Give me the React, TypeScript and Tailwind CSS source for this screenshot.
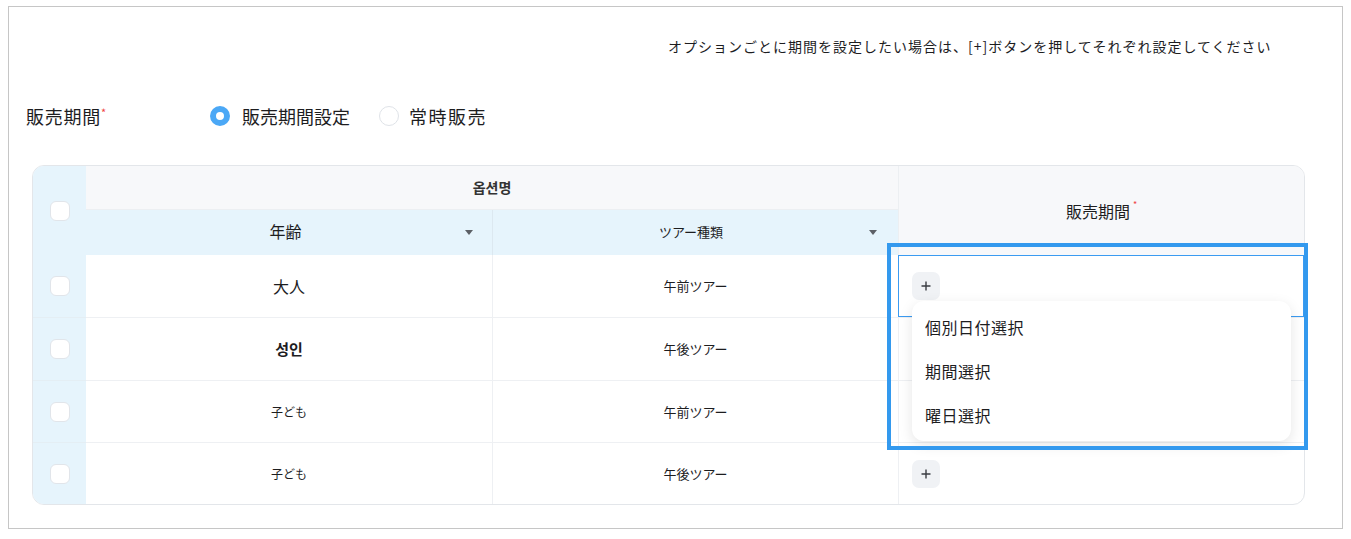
import { useState } from 'react'

type Row = {
  age: string
  ageClass: string
  tour: string
}

const rows: Row[] = [
  { age: '大人', ageClass: 'text-[16px]', tour: '午前ツアー' },
  { age: '성인', ageClass: 'text-[15px] font-bold', tour: '午後ツアー' },
  { age: '子ども', ageClass: 'text-[12px]', tour: '午前ツアー' },
  { age: '子ども', ageClass: 'text-[12px]', tour: '午後ツアー' },
]

const menuItems = ['個別日付選択', '期間選択', '曜日選択']

function Checkbox() {
  return <div className="w-[20px] h-[20px] rounded-[6px] border border-[#e1e5ea] bg-white" />
}

function Caret() {
  return (
    <svg width="8" height="5" viewBox="0 0 8 5" className="shrink-0">
      <path d="M0 0h8L4 5z" fill="#5c6066" />
    </svg>
  )
}

function Radio({ checked }: { checked: boolean }) {
  return checked ? (
    <span className="w-[20px] h-[20px] rounded-full border-[6px] border-[#4ba8f6] bg-white" />
  ) : (
    <span className="w-[20px] h-[20px] rounded-full border border-[#dfe3e8] bg-white" />
  )
}

function PlusButton() {
  return (
    <button className="w-[28px] h-[28px] rounded-[7px] bg-[#f0f2f5] flex items-center justify-center">
      <svg width="10" height="10" viewBox="0 0 10 10">
        <path d="M5 0.5v9M0.5 5h9" stroke="#3a3d42" strokeWidth="1.4" />
      </svg>
    </button>
  )
}

export default function App() {
  const [mode, setMode] = useState<'period' | 'always'>('period')

  return (
    <div className="w-full h-[539px] bg-white pt-[6px] pl-[8px] text-[#1d1d1f] font-['Noto_Sans_CJK_JP','Noto_Sans_CJK_KR',sans-serif]">
      <div className="w-[1335px] h-[523px] border border-[#c6c6c6]">
        {/* hint */}
        <div className="pt-[29px] pl-[659px] text-[14px] leading-[20px] tracking-[1px]">
          オプションごとに期間を設定したい場合は、[+]ボタンを押してそれぞれ設定してください
        </div>

        {/* sale period radios */}
        <div className="mt-[48px] pl-[17px] flex items-center h-[24px]">
          <div className="w-[184px] flex items-start text-[18px] leading-[24px] tracking-[0.75px]">
            販売期間
            <span className="text-[11px] leading-[12px] text-[#ef4444] mt-[2px]">*</span>
          </div>
          <label className="flex items-center gap-[12px] cursor-pointer" onClick={() => setMode('period')}>
            <Radio checked={mode === 'period'} />
            <span className="text-[18px] leading-[24px]">販売期間設定</span>
          </label>
          <label className="ml-[29px] flex items-center gap-[10px] cursor-pointer" onClick={() => setMode('always')}>
            <Radio checked={mode === 'always'} />
            <span className="text-[18px] leading-[24px] tracking-[1.5px]">常時販売</span>
          </label>
        </div>

        {/* option table */}
        <div className="relative mt-[37px] ml-[23px] w-[1273px]">
          <div className="h-[340px] rounded-[12px] border border-[#e3e6ea] overflow-hidden grid grid-cols-[53px_406px_406px_1fr] grid-rows-[44px_45px_62px_63px_62px_62px]">
            <div className="row-span-2 bg-[#e6f4fc] flex items-center justify-center">
              <Checkbox />
            </div>
            <div className="col-span-2 bg-[#f7f8fa] border-b border-[#eceff2] flex items-center justify-center text-[14px] font-bold text-[#333]">
              옵션명
            </div>
            <div className="row-span-2 bg-[#f7f8fa] border-l border-[#eceff2] flex items-center justify-center text-[16px]">
              <span className="flex items-start">
                販売期間
                <span className="text-[9px] leading-[10px] text-[#ef4444] ml-[3px] mt-[1px]">*</span>
              </span>
            </div>
            <div className="bg-[#e6f4fc] flex items-center pl-[20px] pr-[19px]">
              <span className="flex-1 text-center text-[16px] leading-[20px] -mt-[4px]">年齢</span>
              <Caret />
            </div>
            <div className="bg-[#e6f4fc] border-l border-[#dce8f0] flex items-center pl-[20px] pr-[21px]">
              <span className="flex-1 text-center text-[13px] leading-[20px] -mt-[2px]">ツアー種類</span>
              <Caret />
            </div>

            {rows.map((row, i) => (
              <div key={i} className="contents">
                <div className={`bg-[#e6f4fc] flex items-center justify-center ${i > 0 ? 'border-t border-[#e4eef4]' : ''}`}>
                  <Checkbox />
                </div>
                <div className={`flex items-center justify-center ${row.ageClass} ${i > 0 ? 'border-t border-[#eef0f3]' : ''}`}>
                  {row.age}
                </div>
                <div className={`border-l border-[#eef0f3] flex items-center justify-center text-[13px] ${i > 0 ? 'border-t' : ''}`}>
                  {row.tour}
                </div>
                <div
                  className={`flex items-center pl-[13px] ${
                    i === 0 ? 'border border-[#3b9bf1]' : 'border-l border-[#eef0f3]'
                  } ${i > 0 ? 'border-t' : ''}`}
                >
                  <PlusButton />
                </div>
              </div>
            ))}
          </div>

          {/* period type menu */}
          <div className="absolute left-[880px] top-[136px] w-[379px] h-[140px] rounded-[12px] bg-white shadow-[0_4px_14px_rgba(0,0,0,0.1)] py-[4px]">
            {menuItems.map((item) => (
              <div key={item} className="h-[44px] flex items-center pl-[13px] text-[16px] tracking-[0.5px]">
                {item}
              </div>
            ))}
          </div>

          {/* highlight frame */}
          <div className="absolute left-[855px] top-[78px] w-[421px] h-[207px] border-4 border-[#3399ee] pointer-events-none" />
        </div>
      </div>
    </div>
  )
}
